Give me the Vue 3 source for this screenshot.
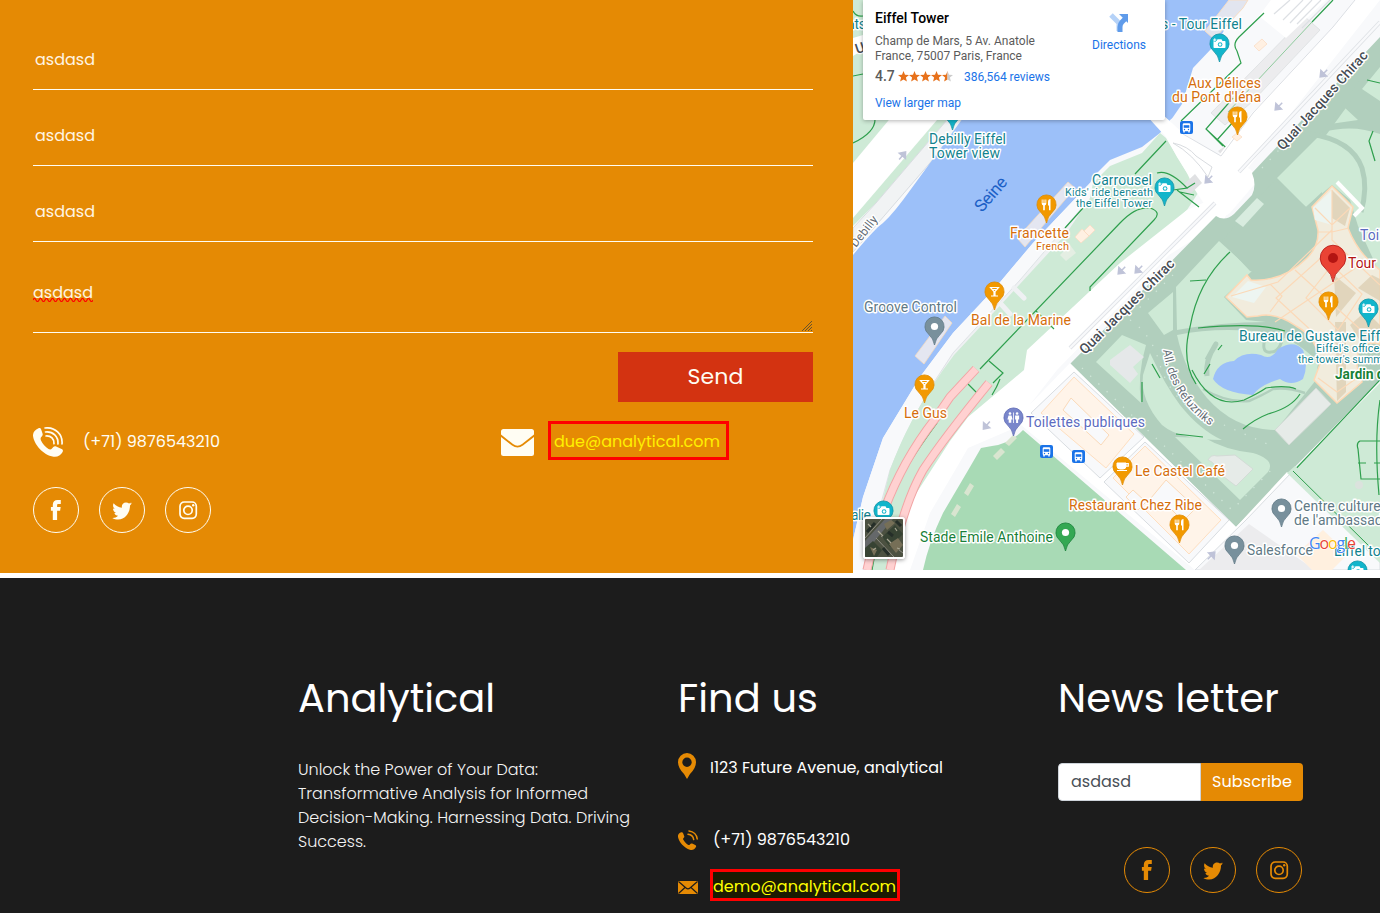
<script setup>
const vFit = {
  mounted(el, binding) {
    const n = el.textContent.length
    const w = el.getBoundingClientRect().width
    el.style.letterSpacing = (binding.value - w) / n + 'px'
  },
}

const fields = ['asdasd', 'asdasd', 'asdasd']
const wave = 'M0 2q1.5-3 3 0' + 't3 0'.repeat(19)
const about = [
  { t: 'Unlock the Power of Your Data:', w: 240 },
  { t: 'Transformative Analysis for Informed', w: 290 },
  { t: 'Decision-Making. Harnessing Data. Driving', w: 332 },
  { t: 'Success.', w: 68 },
]
const socials = ['facebook', 'twitter', 'instagram']

const pins = [
  { x: 952, y: 111, c: '#12b5cb', s: '#1193a4', i: 'cam' },
  { x: 1219, y: 43, c: '#12b5cb', s: '#1193a4', i: 'cam' },
  { x: 1164, y: 187, c: '#12b5cb', s: '#1193a4', i: 'cam' },
  { x: 1368, y: 308, c: '#12b5cb', s: '#1193a4', i: 'cam' },
  { x: 883, y: 510, c: '#12b5cb', s: '#1193a4', i: 'cam' },
  { x: 1357, y: 570, c: '#12b5cb', s: '#1193a4', i: 'cam' },
  { x: 1237, y: 116, c: '#f29900', s: '#e08a00', i: 'food' },
  { x: 1046, y: 204, c: '#f29900', s: '#e08a00', i: 'food' },
  { x: 1328, y: 301, c: '#f29900', s: '#e08a00', i: 'food' },
  { x: 1179, y: 524, c: '#f29900', s: '#e08a00', i: 'food' },
  { x: 994, y: 291, c: '#f29900', s: '#e08a00', i: 'bar' },
  { x: 924, y: 384, c: '#f29900', s: '#e08a00', i: 'bar' },
  { x: 1122, y: 466, c: '#f29900', s: '#e08a00', i: 'cup' },
  { x: 934, y: 326, c: '#78909c', s: '#607985', i: 'dot' },
  { x: 1281, y: 508, c: '#78909c', s: '#607985', i: 'dot' },
  { x: 1234, y: 545, c: '#78909c', s: '#607985', i: 'dot' },
  { x: 1065, y: 532, c: '#34a853', s: '#188038', i: 'dot' },
  { x: 1013, y: 417, c: '#7986cb', s: '#5f6bb5', i: 'wc' },
]

const labels = [
  { t: 'nts', x: 847, y: 29, w: 19, k: 'teal' },
  { t: 's - Tour Eiffel', x: 1161, y: 29, w: 81, k: 'teal' },
  { t: 'Aux Délices', x: 1188, y: 88, w: 73, k: 'orange' },
  { t: "du Pont d'Iéna", x: 1172, y: 102, w: 89, k: 'orange' },
  { t: 'Debilly Eiffel', x: 929, y: 144, w: 77, k: 'teal' },
  { t: 'Tower view', x: 929, y: 158, w: 71, k: 'teal' },
  { t: 'Carrousel', x: 1092, y: 185, w: 60, k: 'teal' },
  { t: "Kids' ride beneath", x: 1065, y: 196, w: 88, k: 'teal small' },
  { t: 'the Eiffel Tower', x: 1076, y: 207, w: 76, k: 'teal small' },
  { t: 'Francette', x: 1010, y: 238, w: 59, k: 'orange' },
  { t: 'French', x: 1036, y: 250, w: 33, k: 'orange small' },
  { t: 'Groove Control', x: 864, y: 312, w: 93, k: 'slate' },
  { t: 'Bal de la Marine', x: 971, y: 325, w: 100, k: 'orange' },
  { t: 'Le Gus', x: 904, y: 418, w: 43, k: 'orange' },
  { t: 'Toilettes publiques', x: 1026, y: 427, w: 119, k: 'violet' },
  { t: 'Le Castel Café', x: 1135, y: 476, w: 90, k: 'orange' },
  { t: 'Restaurant Chez Ribe', x: 1069, y: 510, w: 133, k: 'orange' },
  { t: 'Stade Emile Anthoine', x: 920, y: 542, w: 133, k: 'green' },
  { t: 'Centre culturel', x: 1294, y: 511, w: 90, k: 'slate' },
  { t: "de l'ambassade", x: 1294, y: 525, w: 96, k: 'slate' },
  { t: 'Salesforce', x: 1247, y: 555, w: 66, k: 'slate' },
  { t: 'Eiffel tower', x: 1334, y: 556, w: 69, k: 'teal' },
  { t: 'Toilettes', x: 1360, y: 240, w: 54, k: 'violet' },
  { t: 'Tour', x: 1348, y: 268, w: 28, k: 'red' },
  { t: 'Bureau de Gustave Eiffel', x: 1239, y: 341, w: 152, k: 'teal' },
  { t: "Eiffel's office at", x: 1316, y: 352, w: 76, k: 'teal small' },
  { t: "the tower's summit", x: 1298, y: 363, w: 91, k: 'teal small' },
  { t: 'Jardin de', x: 1335, y: 379, w: 57, k: 'green strong' },
  { t: 'alie', x: 851, y: 520, w: 20, k: 'teal' },
]
const buses = [[1186, 127], [1046, 451], [1078, 456]]
const arrows = [[903, 155, -50], [1323, 74, 135], [1278, 107, 135], [1208, 180, 135], [1121, 271, 135], [1138, 270, 135], [986, 426, 130], [1212, 555, -45]]
</script>

<template>
  <div class="page">
    <svg class="defs" width="0" height="0">
      <defs>
        <symbol id="facebook" viewBox="0 0 20 20"><path d="M14.8 0v4h-2.3c-1 0-1.4.5-1.4 1.4V7h3.6l-.6 3.7h-3V20H6.8v-9.300H4.900V7h1.900V4.700C6.800 1.700 8.600 0 11.500 0z" /></symbol>
        <symbol id="twitter" viewBox="0 0 20 20"><path d="M20 3.100a8 8 0 0 1-2 2.300C18.200 12 13.500 19.400 6.300 19.600 4 19.600 2 19 .3 18c2.200.1 4.200-.6 5.800-2.200-1.900-.2-3.200-1.200-3.700-2.900h1.700C2.300 12 1 10.600 1 8.500l1.800.5C1 7.500.6 5.400 1.600 3.300c2.200 2.600 5 4.200 8.300 4.400C9.300 4.800 11.200 2.500 14 2.500c1.200 0 2.200.5 3 1.100L19.500 2.500 18.200 4z" /></symbol>
        <symbol id="instagram" viewBox="0 0 20 20"><g fill="none" stroke="currentColor" stroke-width="1.700"><rect x="2" y="2" width="16.300" height="16.300" rx="4.200" /><circle cx="10" cy="10.300" r="4.200" /></g><circle cx="15.200" cy="5.300" r="1.200" /></symbol>
        <symbol id="phone" viewBox="0 0 30 30"><path d="M5.500 1.300c1-.5 2.200 0 2.600 1l1.500 4.500c.3 1.100 0 2-.9 2.700C7.400 10.600 7.300 12 8 13.500c1.600 3.400 4.300 6.300 7.500 8.500 1.200.8 2.600.6 3.500-.4l1.300-1.500c.7-.8 1.800-1 2.800-.6l5.500 2.400c1.300.6 1.700 1.900 1 3.100-1.900 3.400-5 5.200-9 4.700C10 28 .8 17 0 8.700c-.2-3.300 2-6 5.500-7.400z" /><g fill="none" stroke="currentColor" stroke-width="1.700" stroke-linecap="round"><path d="M12 1C22-.3 30 7.500 29 17" /><path d="M12.500 5c7.500-.8 13 4.500 12.500 12" /><path d="M13 9c5-.4 8.300 3 8 7.700" /></g></symbol>
        <symbol id="phone-small" viewBox="0 0 20 20"><path d="M3.200 2.300c.8-.4 1.500 0 1.800.8l1.200 3c.3.800 0 1.500-.7 2-.6.500-.5 1.200 0 2 1 1.900 2.500 3.500 4.400 4.600.8.500 1.500.3 2-.3.700-.9 1.400-1.200 2.300-.8l3 1.400c.9.400 1.200 1.200.7 2-1.200 2.400-3.400 3.400-6 2.700C6.300 18 1 12.300 0 7c-.4-2.200 1-4 3.200-4.700z" /><g fill="none" stroke="currentColor" stroke-width="1.500" stroke-linecap="round"><path d="M11 .9c4.500.5 7.800 3.800 8.200 8" /><path d="M10 4.300c3 .3 5.300 2.500 5.700 5.300" /></g></symbol>
        <g id="i-cam" fill="#fff"><path d="M-6-2.500h3l1-1.700h4l1 1.700h2.200q.8 0 .8.800v5.400q0 .8-.8.800H-5.200q-.8 0-.8-.8z" /><circle cx=".6" cy="1" r="2.300" fill="#12b5cb" /><circle cx=".6" cy="1" r="1.300" /><path d="M-4.700-5.500v4M-6.700-3.500h4" stroke="#12b5cb" stroke-width="2" /><path d="M-4.700-5.200v3.400M-6.400-3.500h3.400" stroke="#fff" /></g>
        <g id="i-food" fill="#fff"><path d="M-4.800-5v4q0 1.500 1.500 1.900V5.700h1.600V.9Q-.2.500-.2-1v-4h-.9v3.500h-.9V-5h-1v3.500h-.9V-5zM1.500-2.500Q1.500-5.500 4-5.500V5.700H2.500V1h-1z" /></g>
        <g id="i-bar" fill="none" stroke="#fff" stroke-width="1.200"><path d="M-4-4H4L.5 0V4.300H-.5V0zM-2.800-2h5.600M-3.500 4.500h7" /></g>
        <g id="i-cup"><path d="M-5.500-3.500H3.500v3q0 3-3 3h-3q-3 0-3-3zM-5.500 4h10" fill="#fff" stroke="#fff" stroke-width="1" /><path d="M3.500-2.800h2.300v2.500H3.500" fill="none" stroke="#fff" stroke-width="1.200" /></g>
        <g id="i-dot"><circle r="3.600" fill="#fff" /></g>
        <g id="i-wc" fill="#fff"><circle cx="-3.500" cy="-4" r="1.300" /><path d="M-5-2h3L-.9 2h-1.300v3.300h-2.600V2h-1.300z" /><path d="M-.4-5h.8V5.500h-.8zM1.600-2h4v4h-1v3.500h-2V2h-1z" /><circle cx="3.600" cy="-4" r="1.300" /></g>
      </defs>
    </svg>

    <main class="contact">
      <section class="form">
        <div v-for="(f, i) in fields" :key="i" class="field"><span v-fit="60">{{ f }}</span></div>
        <div class="field area">
          <span v-fit="60">asdasd</span>
          <svg class="wave" width="60" height="4" viewBox="0 0 60 4"><path :d="wave" /></svg>
          <svg class="grip" width="12" height="12" viewBox="0 0 12 12"><path d="M1 11 11 1M4 11l7-7M7 11l4-4M10 11l1-1" /></svg>
        </div>
        <button class="send"><span v-fit="56">Send</span></button>
        <div class="reach">
          <div class="phone"><svg class="tel"><use href="#phone" /></svg><span v-fit="137">(+71) 9876543210</span></div>
          <div class="mail">
            <svg width="33" height="27" viewBox="0 0 33 27"><path d="M2.500 0h28A2.500 2.500 0 0 1 33 2.500V5.500L21 15q-4.500 3.600-9 0L0 5.500v-3A2.500 2.500 0 0 1 2.500 0z" /><path d="m0 8 11 8.500q5.500 4.200 11 0L33 8v16.500a2.500 2.500 0 0 1-2.500 2.500h-28A2.500 2.500 0 0 1 0 24.500z" /></svg>
            <a class="marked"><span v-fit="166">due@analytical.com</span></a>
          </div>
        </div>
        <div class="socials"><a v-for="s in socials" :key="s"><svg><use :href="'#' + s" /></svg></a></div>
      </section>

      <section class="map">
        <svg width="527" height="570" viewBox="853 0 527 570">
          <rect x="853" width="527" height="570" fill="#f8f9fb" />
          <!-- west bank -->
          <path d="M853 0h112v120L853 252z" fill="#ceead6" />
          <path d="M853 38l10-3v15l-10 6z" fill="#fff" />
          <path d="M853 163 893 115H965L853 252z" fill="#fff" />
          <path d="M937 120h10L876 203 853 226v-8z" fill="#ceead6" />
          <path d="M947 120h20L853 252v-24l23-25z" fill="#f1f3f4" stroke="#d8dce0" />
          <g fill="none" stroke="#2e9f4d" stroke-width="1.200"><path d="M853 76l10-2M853 143q23-11 22-25M853 11q3 6 10 5" /></g>
          <!-- Seine -->
          <path d="M963 118 903 200q-15 20-25 27-12 12-25 28v285l10-43 20-59 37-61 33-44 43-46 37-44 57-60 3-6 17-17 32-13 18-14 10-13 22-17 8-28 10-18L1240 0H963z" fill="#9cc0f9" />
          <!-- quays and east park -->
          <path d="M1090 183 1033 243 996 287 953 333 920 377 883 438 863 497 853 540v30h15L890 470 943 370 1066 230l27-35z" fill="#f8f9fb" />
          <path d="M1086 203 1020 280 953 353Q915 408 890 470L863 570h12l16-90q20-65 55-110L1080 221z" fill="#eff1f3" stroke="#d9dde1" stroke-width=".8" />
          <path d="M1160 133 1166 138 1187 173 1200 190 1187 210 1133 263 1040 350 1037 370 981 417 963 441 923 503 903 570H866l24-100q18-50 53-100l11-15 66-71 46-50 24-36 3-15 17-17 32-13z" fill="#ceead6" />
          <path d="M1014 288l10 10M1001 304l9 10" stroke="#eff1f3" stroke-width="5" stroke-linecap="round" />
          <g fill="#e4e6f1" stroke="#f3d9bf" stroke-width=".8"><path d="M1068 182l7 6-50 59-8-9zM945 316l7 7-28 41-9-8z" /></g>
          <!-- right bank by the bridge -->
          <path d="M1250 0 1232 22 1212 48 1193 68 1190 78 1182 104 1171 120 1183 133 1223 156 1255 120 1355 0z" fill="#f8f9fb" />
          <path d="M1229 0 1205 31l9 8L1243 8l5-8z" fill="#e2e5ef" stroke="#f7ddc4" />
          <path d="M1305 17l15 13L1252 102 1225 125l-14-12z" fill="#ececee" stroke="#dcdfe1" stroke-width=".8" />
          <path d="M1287 12l9 9-9 7-9-9zM1237 138l9 19-15 7-13-13z" fill="#e2e2e4" />
          <path d="M1312 22 1228 112" fill="none" stroke="#8fca9d" stroke-width="1" />
          <path d="M1271 0h55l-40 38-27-22z" fill="#fff" />
          <g stroke="#dde0e4" stroke-width="1.200" fill="none"><path d="M1290 0l-16 14M1303 0l-20 20M1312 0l-22 23M1321 0l-24 24M1330 0l-28 28" /></g>
          <g fill="none" stroke="#2e9f4d" stroke-width="1.200"><path d="M1333 0l-21 22M1264 13l-25 24q-7 7-2 14l4 12-60 58M1223 146l-17-17 27-31M1206 129l30 28M1217 140l25-28" /></g>
          <!-- avenue -->
          <path d="M1380 0h-25l-22 27-83 88-34 44-4 40-25 11-67 53-93 87-3 20-56 47-18 24-40 62-20 67h20l20-57 27-46 11-19 42-18 47-60 112-115 55-35 20-47z" fill="#fff" />
          <path d="M1145 114h17l21 19 39 24 28 12q7 5 4 16l-24 28q-10 8-20 0l-15-23-8-17-10-16-11-20z" fill="#fff" />
          <path d="M1355 0l-22 27-80 86-32 43-38-22" fill="none" stroke="#dcdfe4" stroke-width="1" />
          <path d="M1380 22 1239 172M1215 203 1070 348" stroke="#dfe2e6" stroke-width="4" fill="none" /><path d="M1380 22 1239 172M1215 203 1070 348" stroke="#f8f9fb" stroke-width="2.300" fill="none" />
          <path d="M1173 143q15 3 23 13l16 11-4 10q-15-23-35-34z" fill="none" stroke="#d9dce0" />
          <path d="M1202 183l-13 12-7-9 13-12z" fill="#e0e1e3" />
          <!-- Champ de Mars -->
          <path d="M1380 37 1252 173q5 12 0 22l-18 19q-9 8-18 2L1070 364 1236 527 1380 380z" fill="#b1cfbd" />
          <g fill="#ceead6">
            <path d="M1380 67l-18 22 18 12zM1344 107l14 13-28 4z" />
            <path d="M1277 178 1323 132q30-8 57 2v140l-22-48-8-26-18-15-26 22z" />
            <path d="M1219 241l33 30-28 26 22 23 20 2q-44 0-89 8l-1-43z" />
            <path d="M1148 313l25-21v38l-9 5z" />
            <path d="M1177 335q43-9 95-2 30 10 46 30l-2 17-40 50q-41 0-69-32-22-26-30-63z" />
            <path d="M1150 353q15 32 30 52 20 25 42 35-42 0-60-15-22-25-19-50z" />
            <path d="M1122 335l24 10q-9 30-5 58l-45-41z" />
            <path d="M1175 437l30 1q20 12 48 15 23 7 15 19l-28 28z" />
            <path d="M1293 470l87-87v161z" />
          </g>
          <path d="M1275 180 1306 207 1322 192 1320 232q-10 32-48 45l-22-6-28-30 30-36z" fill="#b1cfbd" />
          <path d="M1310 134q42 6 52 34 6 20-1 44M1361 83l-38 52" fill="none" stroke="#b1cfbd" stroke-width="5" />
          <path d="M1267 332q-8 22 4 20 10 0 12-18" fill="none" stroke="#b1cfbd" stroke-width="3" />
          <path d="M1207 360q12-22 8-14-10 14-8 30" fill="none" stroke="#b1cfbd" stroke-width="5" />
          <path d="M1130 320q22 14 30 45 14 45 64 60l50 22M1173 275l-38 37M1262 168l50-53M1335 90l26-22M1082 368l150 142 45-46" fill="none" stroke="#cfe6d8" stroke-width="1.300" stroke-dasharray="1.300 10" />
          <path d="M1213 379q4-17 21-18 10-10 27-6 10 6 17-6 16-10 25 1 6 14 0 29-12 8-23 0-20 6-27 16-31-2-40-16z" fill="#9cc0f9" />
          <path d="M1203 389q24 14 46 12 14-6 24-12 14-2 32 4" fill="none" stroke="#b1cfbd" stroke-width="2.500" />
          <path d="M1316 388l15 16-42 41-14-15zM1235 455l18 14-17 17-20-15q0-8-8-11 3-6 9-4z" fill="#e6ebe8" stroke="#d3dbd6" />
          <path d="M1257 198l7 6-21 23-8-6z" fill="#d8ecdf" />
          <path d="M1110 360l20-15 14 12-11 10 5 7-8 9-20-18z" fill="#e5e8e9" />
          <!-- tower -->
          <path d="M1337 182l25 26-8 8" fill="none" stroke="#fff" stroke-width="4" />
          <path d="M1332 186 1353 207 1348 228q10 26 32 42v74q-16-4-22 8l-1 14 5 16-25 21-23-23 6-16q-2-26-24-38-20-14-38-10L1247 317 1226 297 1247 275 1251 280q32 2 56-22 12-12 11-28L1312 207z" fill="#f1ecdd" stroke="#ffd9b5" stroke-width="1.500" />
          <path d="M1332 190v35l-17-5-2-12zM1232 297l16-16 18 6-12 16z" fill="#edf5f1" />
          <path d="M1332 190l18 18-5 18-13-8zM1334 275l22 18-20 24zM1350 325l16-14 14 14v10l-18 9zM1335 322h11v70l-9 9zM1358 288l14-13 8 4v22z" fill="#ddd0b4" opacity=".8" />
          <path d="M1332 190v50l48 45M1318 232l14 0 17-4M1332 230l-54 52-47 14M1332 248l-56 50 54 50M1332 265l-26 33 32 32 24-36-30-29M1270 284l12 12-12 16M1295 270l66 60M1360 265l-85 57M1320 350h36M1318 378l19 14 20-14M1315 208l17 17 18-17" fill="none" stroke="#fbd9b8" stroke-width="1.200" />
          <!-- footpaths -->
          <g fill="none" stroke="#2e9f4d" stroke-width="1.200">
            <path d="M1166 141l-31 33M1083 208l-18 20M980 369 1120 223q16-17 30-15 12 4 4 12l-64 67v4M1036 311l18 18M989 361l14 12-10 10M968 384l12 12M1000 379q-3 8-8 16M1157 173q12-4 30 15l-14 2M1187 188l8-5M1177 190l22 17M1180 192l14 3" />
            <path d="M1230 252q-32 29-40 75-9 34 6 57M1190 281l16-1M1198 328q60-6 87 3M1204 374l6-10M1218 350l4-5M1192 370q20 40 52 30 15-7 22-12 20-3 30 1M1243 429q12-10 25-15 23-6 32-20M1176 434l27 3M1252 515l128-135M1293 471l77 76M1380 441h-20q-4 2-2 8l3 30h19M1358 463h8M1374 463h6M1380 400q-6 40-1 95M1373 131l-4 10 6 20M1367 80l13 3M1152 364l8 14M1142 382v20" />
            <path d="M937 423q-37 50-46 77M872 570l4-22" />
          </g>
          <!-- railway -->
          <g fill="none" stroke="#f2a5a5"><path d="M976 369l-26 28-15 22Q885 483 867 570" stroke-width="9" /><path d="M989 383q-45 55-66 87-20 35-33 100" stroke-width="9" /></g>
          <g fill="none" stroke="#ffd1d1"><path d="M976 369l-26 28-15 22Q885 483 867 570" stroke-width="7" /><path d="M989 383q-45 55-66 87-20 35-33 100" stroke-width="7" /></g>
          <!-- stadium -->
          <path d="M1023 430q-13 14-31 16l-11 2-11 19-27 46q-14 29-20 57h263z" fill="#a8dab5" />
          <g fill="#d9e5d0"><path d="M1013 435l4 3-8 8-4-3zM1001 448l4 4-8 8-4-4zM970 483l4 3-6 10-4-3zM957 504l4 3-6 10-4-3z" /></g>
          <!-- city blocks -->
          <path d="M1070 363 1015 420l180 150h185v-26l-93-72-51 55z" fill="#fff" />
          <path d="M1074 372l70 65-44 41-69-65zM1145 442l84 78-40 43-85-81zM1246 520l46-48 88 80v18H1195z" fill="#f8f9fb" stroke="#d9dde1" />
          <path d="M1249 524l66 46h-116z" fill="#ececee" />
          <path d="M1074 377l60 57-28 34-65-55zM1145 446l76 74-32 34-76-76z" fill="#fff4e9" stroke="#ffdfc0" />
          <path d="M1071 398l38 37-8 10-38-35zM1133 490l13 12-8 8-12-13zM1166 480l30 28-13 13-15-15-10 1-7-9z" fill="#f8f9fb" stroke="#fbdab9" />
          <path d="M1287 473l93 90v-20l-85-77z" fill="#ceead6" />
          <path d="M1323 530l25 24-16 16h-20l-16-16z" fill="#fff0df" />
          <path d="M1293 471l77 76" stroke="#2e9f4d" /><circle cx="1359" cy="485" r="4" fill="#dbe2dd" />
          <path d="M1070 245l6 8-10 8-6-6z" fill="#e4eee3" />
          <g fill="#fff0e2" stroke="#fadac0" stroke-width=".7"><path d="M1262 39l5 5-8 7-5-5zM1237 133l5 4-5 4-5-4zM1082 229l7 7-8 7-6-6zM1090 225l5 5-6 6-5-5z" /></g>
          <g v-for="(a, i) in arrows" :key="'a' + i" :transform="`translate(${a[0]} ${a[1]}) rotate(${a[2]})`"><path d="M-6 0h8M-1-4l5 4-5 4z" fill="#bfc3d8" stroke="#bfc3d8" stroke-width="1.500" /></g>
          <g v-for="(b, i) in buses" :key="'b' + i" :transform="`translate(${b[0] + .5} ${b[1] + .5})`"><rect x="-6.500" y="-6.500" width="13" height="13" rx="2" fill="#1a73e8" /><rect x="-3.800" y="-4.300" width="7.600" height="8" rx="1.300" fill="#fff" /><path d="M-2.800-2.300h5.600v2.600h-5.600z" fill="#1a73e8" /><path d="M-2.500 3v2M2.500 3v2" stroke="#fff" stroke-width="1.500" /><circle cx="-2" cy="2" r=".7" fill="#1a73e8" /><circle cx="2" cy="2" r=".7" fill="#1a73e8" /></g>

          <!-- street names -->
          <g class="lbl street">
            <text transform="translate(1085 355) rotate(-45)" textLength="128">Quai Jacques Chirac</text>
            <text transform="translate(1283 151) rotate(-48)" textLength="128">Quai Jacques Chirac</text>
            <text class="thin" transform="translate(856 248) rotate(-52)" textLength="36">Debilly</text>
            <text transform="translate(857 54) rotate(-18)">U</text>
            <path id="refuz" d="M1163 350Q1170 400 1215 429" fill="none" stroke="none" />
            <text class="thin"><textPath href="#refuz" textLength="92">All. des Refuzniks</textPath></text>
          </g>
          <text class="seine" transform="translate(982 213) rotate(-49)" textLength="40">Seine</text>

          <g v-for="(p, i) in pins" :key="'p' + i" :transform="`translate(${p.x + .5} ${p.y + .5})`">
            <path d="M0 18.500Q-1 12-6 7.500A9.600 9.600 0 1 1 6 7.500Q1 12 0 18.500z" :fill="p.c" :stroke="p.s" stroke-width=".8" />
            <use :href="'#i-' + p.i" />
          </g>
          <g class="lbl"><text v-for="(l, i) in labels" :key="'l' + i" :x="l.x" :y="l.y" :textLength="l.w" :class="l.k">{{ l.t }}</text></g>
          <path d="M1333 282q-1-8-8-14a12.800 12.800 0 1 1 16 0q-7 6-8 14z" fill="#ea4335" stroke="#b31412" stroke-width=".8" /><circle cx="1333" cy="258" r="5" fill="#b31412" />
          <text class="google" x="1309" y="549" textLength="47"><tspan fill="#4285f4">G</tspan><tspan fill="#ea4335">o</tspan><tspan fill="#fbbc04">o</tspan><tspan fill="#4285f4">g</tspan><tspan fill="#34a853">l</tspan><tspan fill="#ea4335">e</tspan></text>
        </svg>

        <svg class="thumb" width="38" height="38" viewBox="0 0 38 38">
          <rect width="38" height="38" fill="#4c5141" />
          <path d="M0 22 20 0h8L12 19 0 35z" fill="#65686a" /><path d="M17 0 0 19M11 19 29 38M16 17l22 17" stroke="#8f8e84" stroke-width="1" />
          <path d="M17 18 30 6l8 9-13 13zM0 29l8-7 9 9-5 7H0z" fill="#374333" /><path d="M24 25l9-6 5 7-7 8zM19 5l7-4 4 3-8 7zM5 28l7 3-3 6z" fill="#766f57" /><path d="M2 13l8-9M23 13l5 4M18 29l6 7M31 2l5 5" stroke="#252e28" stroke-width="3" />
          <path d="M3 5l3 3M13 12l5 5M22 20l4 4M8 31l3-2M30 9l2 3M32 29l3 1" stroke="#a9a693" stroke-width="1.200" />
        </svg>

        <div class="card">
          <div class="place">
            <h3><span v-fit="74">Eiffel Tower</span></h3>
            <p><span v-fit="160">Champ de Mars, 5 Av. Anatole</span></p>
            <p><span v-fit="147">France, 75007 Paris, France</span></p>
            <div class="rate">
              <b>4.7</b>
              <svg width="55" height="11" viewBox="0 0 55 11"><g fill="#e7711b"><path v-for="n in 4" :key="n" :transform="`translate(${(n - 1) * 11} 0)`" d="M5.500 0 7 3.700l4 .3-3.100 2.600 1 3.900-3.400-2.100-3.400 2.100 1-3.900L0 4l4-.3z" /><path d="M49.500 0v8.400l-3.400 2.100 1-3.900L44 4l4-.3z" /></g><path d="M49.500 0 51 3.700l4 .3-3.100 2.600 1 3.900-3.400-2.100z" fill="#ccc" /></svg>
              <a><span v-fit="86">386,564 reviews</span></a>
            </div>
            <a class="larger"><span v-fit="86">View larger map</span></a>
          </div>
          <div class="directions">
            <svg width="22" height="22" viewBox="0 0 22 22"><path d="M3 3l8 8v8" fill="none" stroke="#b5d2f8" stroke-width="5" /><path d="M12 20v-5q0-3 2-5l4-4" fill="none" stroke="#5f9bea" stroke-width="5" /><path d="M11 2h9v9z" fill="#5f9bea" /></svg>
            <a><span v-fit="54">Directions</span></a>
          </div>
        </div>
      </section>
    </main>

    <footer>
      <div class="col">
        <h2><span v-fit="197">Analytical</span></h2>
        <p class="about"><span v-for="l in about" :key="l.t" v-fit="l.w">{{ l.t }}</span></p>
      </div>
      <div class="col find">
        <h2><span v-fit="140">Find us</span></h2>
        <div class="line addr"><svg width="18" height="26" viewBox="0 0 18 26"><path fill-rule="evenodd" d="M9 0a9 9 0 0 1 9 9q0 6-6 12l-3 5-3-5Q0 15 0 9a9 9 0 0 1 9-9zm0 4.500a4.700 4.700 0 1 0 0 9.400 4.700 4.700 0 0 0 0-9.400z" /></svg><span v-fit="233">I123 Future Avenue, analytical</span></div>
        <div class="line call"><svg width="20" height="20"><use href="#phone-small" /></svg><span v-fit="137">(+71) 9876543210</span></div>
        <div class="line post">
          <svg width="20" height="13" viewBox="0 0 20 13"><rect width="20" height="13" rx=".8" /><path d="M.5.500 8 7q2 1.700 4 0L19.500.500M.5 12.500l6.500-6M19.500 12.500l-6.500-6" fill="none" stroke="#1c1c1c" stroke-width="1.200" /></svg>
          <a class="marked"><span v-fit="183">demo@analytical.com</span></a>
        </div>
      </div>
      <div class="col">
        <h2><span v-fit="221">News letter</span></h2>
        <div class="subscribe"><div><span v-fit="60">asdasd</span></div><button><span v-fit="80">Subscribe</span></button></div>
        <div class="socials"><a v-for="s in socials" :key="s"><svg><use :href="'#' + s" /></svg></a></div>
      </div>
    </footer>
  </div>
</template>

<style>
body { margin: 0; overflow: hidden; background: #fff; }
</style>

<style scoped>
* { box-sizing: border-box; }
.page { width: 1380px; height: 913px; overflow: hidden; background: #fff; font: 400 16px/24px Poppins, Inter, sans-serif; font-feature-settings: "cv11" 1; color: #fff; }
.page span { display: inline-block; white-space: nowrap; }
.defs { position: absolute; }
h2, h3, p { margin: 0; }
svg { display: block; flex: none; fill: currentColor; }
button { border: 0; padding: 0; font: inherit; color: inherit; }
.contact { display: flex; height: 578px; }
.form { width: 853px; height: 573px; padding: 14px 40px 0 33px; background: #e58a04; color: #fffdf3; }
.field { position: relative; height: 76px; padding: 34px 2px 0; border-bottom: 1px solid #fffdf3; }
.field span { color: #fff5e4; }
.form .area { height: 91px; padding: 39px 0 0; }
.wave { position: absolute; left: 0; bottom: 30px; fill: none; stroke: #f00; stroke-width: 1.200; }
.grip { position: absolute; right: 0; bottom: 0; fill: none; stroke: #67522d; stroke-width: 1; }
.send { display: block; width: 195px; height: 50px; margin: 19px 0 0 auto; background: #d33311; font-size: 22px; text-align: center; }
.reach { display: flex; height: 39px; margin-top: 19px; }
.phone, .mail { display: flex; align-items: center; }
.phone { width: 468px; gap: 20px; }
.tel { width: 30px; height: 30px; margin-top: 3px; }
.mail { gap: 14px; }
.mail svg { margin-top: 4px; }
.marked { display: flex; align-items: center; border: 3px solid #f00; color: #ff0; }
.mail .marked { width: 181px; height: 39px; padding-left: 3px; color: #fff000; }
.phone span, .marked span { margin-top: 2px; }
.socials { display: flex; gap: 20px; }
.form .socials { margin-top: 27px; }
.socials a { display: grid; place-items: center; width: 46px; height: 46px; border: 1px solid currentColor; border-radius: 50%; }
.socials svg { width: 20px; height: 20px; }
.map { position: relative; width: 527px; height: 570px; overflow: hidden; font-family: Roboto, sans-serif; font-feature-settings: normal; }
.lbl text { font: 14px Roboto, sans-serif; paint-order: stroke; stroke: #fff; stroke-width: 2.800px; stroke-linejoin: round; fill: #5f6368; }
.lbl .small { font-size: 11px; }
.lbl .strong { font-weight: 700; }
.lbl .teal { fill: #12838f; }
.lbl .orange { fill: #d56e0c; }
.lbl .slate { fill: #607985; }
.lbl .violet { fill: #5c6bc0; }
.lbl .green { fill: #188038; }
.lbl .red { fill: #b31412; }
.street text { fill: #474d55; font-weight: 500; }
.street .thin { font-size: 12px; font-weight: 400; fill: #636c75; }
.seine { font: 17px Roboto, sans-serif; fill: #1b5fc6; }
.google { font: 500 16px "Open Sans", sans-serif; paint-order: stroke; stroke: #fff; stroke-width: 1px; }
.thumb { position: absolute; left: 10px; top: 517px; width: 42px; height: 42px; border: 2px solid #fff; border-radius: 3px; box-shadow: 0 1px 4px rgba(0, 0, 0, .4); }
.card { position: absolute; left: 10px; top: 0; display: flex; justify-content: space-between; width: 302px; height: 120px; padding: 9px 19px 0 12px; border-radius: 0 0 2px 2px; background: #fff; box-shadow: 0 1px 4px rgba(0, 0, 0, .3); font-size: 12px; line-height: 15px; color: #5b5b5b; }
.card h3 { height: 25px; font-size: 14px; font-weight: 500; line-height: 18px; color: #000; }
.card a { color: #1a73e8; }
.rate { display: flex; align-items: center; height: 18px; margin-top: 3px; }
.rate b { width: 23px; font-size: 14px; font-weight: 500; }
.rate a { margin-left: 11px; padding-top: 2px; }
.larger { display: block; margin-top: 11px; }
.directions { display: flex; flex-direction: column; align-items: center; gap: 4px; padding-top: 3px; }
footer { display: grid; grid-template-columns: repeat(3, 380px); height: 335px; padding: 96px 0 0 298px; background: #1c1c1c; }
h2 { height: 48px; font-size: 40px; font-weight: 400; line-height: 48px; }
.about { display: flex; flex-direction: column; align-items: flex-start; margin-top: 36px; font-weight: 300; color: #f3f3f3; }
.line { display: flex; align-items: center; }
.line svg { color: #e58a04; }
.addr { height: 26px; margin-top: 31px; gap: 14px; }
.addr span { margin-top: 3px; }
.call { height: 24px; margin-top: 49px; gap: 15px; }
.post { height: 32px; margin-top: 17px; gap: 12px; }
.post svg { margin-top: 5px; }
.post .marked { width: 190px; height: 32px; background: #1b1b02; }
.post .marked span { margin-top: 4px; }
.subscribe { display: flex; width: 245px; height: 38px; margin-top: 41px; border-radius: 4px; overflow: hidden; }
.subscribe div { width: 143px; padding: 6px 12px; border: 1px solid #ced4da; border-radius: 4px 0 0 4px; background: #fff; color: #495057; }
.subscribe button { flex: 1; background: #e58a04; }
.col .socials { margin: 46px 0 0 66px; color: #e58a04; }
</style>
